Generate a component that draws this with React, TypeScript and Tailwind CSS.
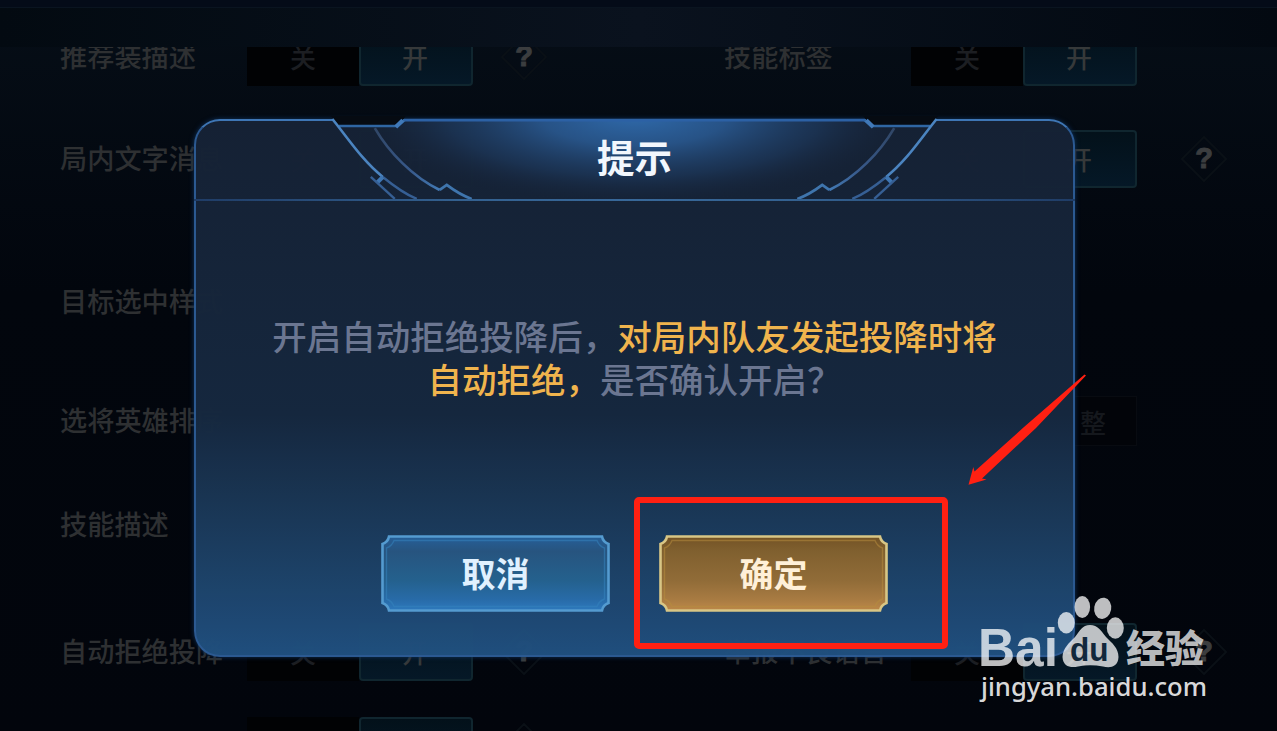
import React from "react";

type Side = { label: string; help?: boolean; toggle?: boolean; action?: string };

function Toggle() {
  return (
    <div className="flex h-[58px] w-[226px] text-[26px] font-medium">
      <div className="flex w-[112px] items-center justify-center bg-[#010204] pb-[2px] text-[#1c1e22]">关</div>
      <div className="flex w-[114px] items-center justify-center rounded-sm border-2 border-[#10262f] bg-linear-to-b from-[#03111a] to-[#051827] pb-[2px] pr-[2px] text-[#36393a]">
        开
      </div>
    </div>
  );
}

function Help({ wide }: { wide?: boolean }) {
  return (
    <div className={"relative flex size-[46px] items-center justify-center " + (wide ? "ml-[44px]" : "ml-[28px]")}>
      <svg viewBox="0 0 46 46" className="absolute inset-0 size-full" fill="none" stroke="#0a1016" strokeWidth="2">
        <path d="M23 1 45 23 23 45 1 23Z" />
      </svg>
      <span className="relative font-['Liberation_Sans',sans-serif] text-[29px] font-bold text-[#3b3d3f] [-webkit-text-stroke:1px_#3b3d3f]">
        ?
      </span>
    </div>
  );
}

function Cell({ side, wide }: { side?: Side; wide?: boolean }) {
  if (!side) return <div />;
  return (
    <div className="flex items-center">
      <div className="w-[187px] whitespace-nowrap pb-[3px] text-[27.200px] font-medium text-[#2e3032]">{side.label}</div>
      {side.toggle && <Toggle />}
      {side.action && (
        <div className="flex h-[50px] w-[226px] items-center justify-end border border-[#080b11] bg-[#020409] pr-[25px] text-[26px] font-medium tracking-[5px] text-[#15181d]">
          {side.action}
        </div>
      )}
      {side.help && <Help wide={wide} />}
    </div>
  );
}

function Row({ className, left, right }: { className: string; left: Side; right?: Side }) {
  return (
    <div className={"grid h-[58px] shrink-0 grid-cols-[664px_1fr] items-center pl-[60px] " + className}>
      <Cell side={left} />
      <Cell side={right} wide />
    </div>
  );
}

function Ornament() {
  const half = (
    <>
      <path d="M137 -3H212L205 6H145Z" fill="#060b12" />
      <path d="M145 7H204L211 1" stroke="#2f66a3" strokeWidth="2.6" />
      <path d="M202 8 209 1" stroke="#4179b8" strokeWidth="4" />
      <path d="M138.500 0C154 19 168 41 189 58" stroke="#4b84c0" strokeWidth="2.6" />
      <path d="M189 58C200 67 211 75 223 80" stroke="#365f94" strokeWidth="2.4" />
      <path d="M181 9C195 33 219 58 246 71" stroke="url(#arc)" strokeWidth="2.6" />
      <path d="M246 71 253 66C261 72 269 77 278 80" stroke="#3f75ad" strokeWidth="2.8" />
      <path d="M189 58 183 64" stroke="#3e76b3" strokeWidth="4" />
      <path d="M177 58 201 80" stroke="#365f94" strokeWidth="2.4" />
    </>
  );
  return (
    <svg viewBox="0 0 882 82" className="absolute left-0 top-0 h-[82px] w-[881px] overflow-visible" fill="none">
      <defs>
        <radialGradient id="glow" gradientUnits="userSpaceOnUse" cx="0" cy="0" r="1" gradientTransform="translate(441 -4) scale(270 88)">
          <stop offset="0" stopColor="#2f6aab" />
          <stop offset="0.35" stopColor="#29588f" stopOpacity="0.9" />
          <stop offset="0.7" stopColor="#20416b" stopOpacity="0.5" />
          <stop offset="1" stopColor="#182740" stopOpacity="0" />
        </radialGradient>
        <linearGradient id="arc" gradientUnits="userSpaceOnUse" x1="181" y1="9" x2="246" y2="71">
          <stop offset="0" stopColor="#304666" />
          <stop offset="0.6" stopColor="#38598a" />
          <stop offset="1" stopColor="#4279b4" />
        </linearGradient>
        <linearGradient id="rule">
          <stop offset="0" stopColor="#1f3c66" />
          <stop offset="0.3" stopColor="#33608f" />
          <stop offset="0.5" stopColor="#386899" />
          <stop offset="0.7" stopColor="#33608f" />
          <stop offset="1" stopColor="#1f3c66" />
        </linearGradient>
      </defs>
      <path d="M144 7H206L214 1H668L676 7H738C712 45 682 70 659 80H223C200 70 170 45 144 7Z" fill="url(#glow)" />
      <path d="M210 1H672" stroke="#2c61a5" strokeWidth="2.8" />
      <g>{half}</g>
      <g transform="translate(882 0) scale(-1 1)">{half}</g>
      <path d="M0 80H882V82H0Z" fill="url(#rule)" />
    </svg>
  );
}

function GameButton({ gold, children }: { gold?: boolean; children: React.ReactNode }) {
  const id = gold ? "gold" : "blue";
  const line = gold ? "#d8c685" : "#549bd0";
  return (
    <button
      className={
        "relative flex h-[77px] w-[229px] items-center justify-center text-[34px] font-bold " +
        (gold ? "text-[#fff0d8]" : "text-[#e0f1ff]")
      }
    >
      <svg viewBox="0 0 229 77" className="absolute inset-0 size-full" fill="none">
        <defs>
          <linearGradient id={id} x2="0" y2="1">
            <stop offset="0" stopColor={gold ? "#735225" : "#265f99"} />
            <stop offset="0.2" stopColor={gold ? "#80602f" : "#27547f"} />
            <stop offset="0.6" stopColor={gold ? "#916c38" : "#24618e"} />
            <stop offset="0.85" stopColor={gold ? "#a87b42" : "#286ba8"} />
            <stop offset="1" stopColor={gold ? "#bd8849" : "#2e79bd"} />
          </linearGradient>
        </defs>
        <path
          d="M8 1.5H221Q222 7 227.500 9V68Q222 70 221 75.500H8Q7 70 1.500 68V9Q7 7 8 1.500Z"
          fill={`url(#${id})`}
          stroke={line}
          strokeWidth="2.6"
        />
        <path
          d="M13 5.500H216Q218 11 223.500 13V64Q218 66 216 71.500H13Q11 66 5.500 64V13Q11 11 13 5.500Z"
          stroke={gold ? "#b78c3e" : "#3583be"}
          strokeWidth="1.400"
          opacity="0.55"
        />
      </svg>
      <span className="relative pb-[2px]">{children}</span>
    </button>
  );
}

function Dialog() {
  return (
    <section className="absolute left-[194px] top-[119px] flex h-[538px] w-[881px] flex-col items-center">
      <div className="absolute inset-0 rounded-[26px] border-[2.500px] border-[#2c5b94] border-t-[#3f78b8] bg-linear-to-b from-[#162235] from-0% via-[#16283f] via-55% to-[#20507f] to-100% opacity-[0.985] shadow-[0_0_5px_#12345d]" />
      <Ornament />
      <h1 className="relative flex h-[80px] items-center pb-[5px] text-[37.500px] font-bold text-[#f2f7fd]">提示</h1>
      <p className="relative mt-[115px] h-[86px] whitespace-nowrap text-center text-[34.500px] font-medium leading-[43px] text-[#6b7691]">
        开启自动拒绝投降后，<span className="text-[#f0b44d]">对局内队友发起投降时将</span>
        <br />
        <span className="text-[#f0b44d]">自动拒绝，</span>是否确认开启？
      </p>
      <div className="relative mt-[135px] flex gap-[49px]">
        <GameButton>取消</GameButton>
        <GameButton gold>确定</GameButton>
      </div>
    </section>
  );
}

function Watermark() {
  return (
    <svg viewBox="978 594 232 112" className="absolute left-[978px] top-[594px] h-[112px] w-[232px]">
      <g fill="#fff" fillOpacity="0.74">
        <text x="978" y="666" fontSize="54" fontWeight="700" textLength="80" lengthAdjust="spacingAndGlyphs" fontFamily="Liberation Sans, sans-serif">
          Bai
        </text>
        <ellipse cx="1066.300" cy="622.700" rx="8.500" ry="10.700" />
        <ellipse cx="1082.300" cy="607" rx="7.800" ry="11" />
        <ellipse cx="1102.700" cy="608.300" rx="8.500" ry="10.700" transform="rotate(10 1102.700 608.300)" />
        <ellipse cx="1115.300" cy="628" rx="8.500" ry="10.700" />
        <path d="M1090 625C1098 625 1101 631 1106 637C1112 643 1118.500 648 1118.500 657C1118 668 1109 668 1103 666.500Q1090 664 1078 666.500C1071 668 1063 667 1062.500 657C1063 648 1069 643 1075 637C1080 631 1082 625 1090 625Z" />
        <text x="1126" y="661.500" fontSize="38" fontWeight="900" textLength="78" lengthAdjust="spacingAndGlyphs" fontFamily="Noto Sans CJK SC, sans-serif">
          经验
        </text>
        <text x="981" y="696" fontSize="26" fontWeight="500" fillOpacity="0.87" textLength="226" lengthAdjust="spacingAndGlyphs" fontFamily="Noto Sans, sans-serif">
          jingyan.baidu.com
        </text>
      </g>
      <text x="1070" y="661" fontSize="33" fontWeight="700" fill="#12283b" textLength="38.500" lengthAdjust="spacingAndGlyphs" fontFamily="Liberation Sans, sans-serif">
        du
      </text>
    </svg>
  );
}

export default function App() {
  return (
    <div className="relative flex h-[731px] w-[1277px] flex-col overflow-hidden bg-linear-to-b from-[#060e17] via-[#02060d] via-40% to-[#02050c] font-['Noto_Sans_CJK_SC',sans-serif]">
      <header className="h-[8px] shrink-0 border-b border-[#0a1420] bg-[#040b18]" />
      <div className="h-[39px] shrink-0 bg-linear-to-r from-[#030a11] via-[#0a121e] to-[#030911]" />
      <main className="flex min-h-0 grow flex-col overflow-hidden">
        <Row className="-mt-[19px]" left={{ label: "推荐装描述", toggle: true, help: true }} right={{ label: "技能标签", toggle: true }} />
        <Row className="mt-[44px]" left={{ label: "局内文字消息", toggle: true }} right={{ label: "", toggle: true, help: true }} />
        <Row className="mt-[85px]" left={{ label: "目标选中样式" }} />
        <Row className="mt-[61px]" left={{ label: "选将英雄排序" }} right={{ label: "", action: "调整" }} />
        <Row className="mt-[46px]" left={{ label: "技能描述" }} />
        <Row className="mt-[69px]" left={{ label: "自动拒绝投降", toggle: true, help: true }} right={{ label: "举报不良语言", toggle: true, help: true }} />
        <Row className="mt-[36px]" left={{ label: "", toggle: true, help: true }} />
      </main>
      <Dialog />
      <div className="absolute left-[634px] top-[497px] h-[152px] w-[314px] rounded-[5px] border-[6px] border-[#ff2012]" />
      <svg viewBox="960 370 130 120" className="absolute left-[960px] top-[370px] h-[120px] w-[130px]" fill="#ff2012">
        <path d="M1084.500 374.500 1086 375.500 1036 428 982 478.500 986.500 479.500 968.500 484.800 973.300 467 974.500 471.500 1024 427Z" />
      </svg>
      <Watermark />
    </div>
  );
}
